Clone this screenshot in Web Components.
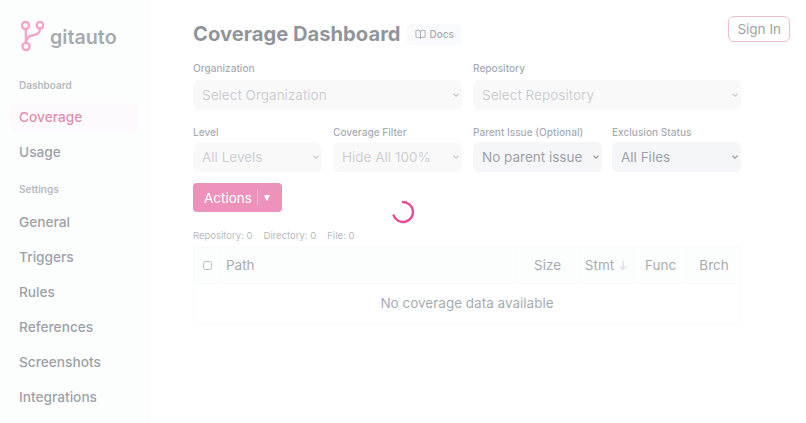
<!DOCTYPE html>
<html lang="en"><head><meta charset="utf-8"><title>Coverage Dashboard</title>
<style>
html,body{margin:0;height:100%;overflow:hidden;background:#fff;font-family:Inter,"Liberation Sans",sans-serif;color:#111827}
</style></head><body>
<app-shell>
  <side-bar slot="side"></side-bar>
  <coverage-page slot="main"></coverage-page>
</app-shell>
<loading-overlay></loading-overlay>
<script>
const def=(name,html)=>customElements.define(name,class extends HTMLElement{
  constructor(){super();this.attachShadow({mode:'open'}).innerHTML=typeof html==='function'?html(this):html}
});
def('app-shell',`<style>:host{display:flex;height:423px;overflow:hidden}
slot[name=main]{display:block;flex:1;min-width:0}</style><slot name="side"></slot><slot name="main"></slot>`);

def('nav-item',el=>`<style>:host{display:flex;align-items:center;height:30px;padding:0 9px;border-radius:8px;font-size:13.7px;font-weight:500;color:#374151}
:host([active]){background:#fdf2f8;color:#be185d}</style><slot></slot>`);
def('nav-label',`<style>:host{display:block;font-size:10px;font-weight:600;color:#6b7280;padding:0 9px;line-height:14px}</style><slot></slot>`);
def('side-bar',`<style>:host{display:block;width:150px;flex:none;height:423px;box-sizing:border-box;background:#f9fafb;border-right:1px solid #f3f4f6;padding:0 10px;overflow:hidden}
.logo{display:flex;align-items:center;gap:6px;height:36px;margin:19px 0 0 10px}
.word{font-size:19.7px;font-weight:600;color:#4b5563;font-family:Inter,sans-serif}
svg{display:block}
nav-label{margin-top:15px;margin-bottom:11px}
nav-item+nav-item{margin-top:5px}
.first{margin-top:23px;margin-bottom:10px}
</style>
<div class="logo"><svg width="24" height="36" viewBox="0 0 24 36" fill="none" stroke="#ec4899" stroke-width="2.4" stroke-linecap="round">
<circle cx="5.5" cy="6.5" r="3.6"/><circle cx="20" cy="6.2" r="3.3"/><circle cx="6" cy="27.5" r="3.6"/>
<path d="M5.8 10 L6 24"/><path d="M20 9.5 C20 15 16 15.5 12 16.5 C8.5 17.5 6.3 19 6 23"/></svg>
<span class="word">gitauto</span></div>
<nav-label class="first">Dashboard</nav-label>
<nav-item active>Coverage</nav-item>
<nav-item>Usage</nav-item>
<nav-label>Settings</nav-label>
<nav-item>General</nav-item>
<nav-item>Triggers</nav-item>
<nav-item>Rules</nav-item>
<nav-item>References</nav-item>
<nav-item>Screenshots</nav-item>
<nav-item>Integrations</nav-item>`);

customElements.define('filter-select',class extends HTMLElement{
  constructor(){super();const s=this.attachShadow({mode:'open'});
  const dis=this.hasAttribute('disabled')?'disabled':'';
  s.innerHTML=`<style>:host{display:block;min-width:0}
  label{display:block;font-size:10.1px;font-weight:500;color:#4b5563;line-height:14px;margin-bottom:var(--label-gap,5px)}
  .wrap{position:relative}
  select{display:block;appearance:none;width:100%;height:30px;box-sizing:border-box;border:0;border-radius:6px;background-color:#ebecee;color:#374151;font:400 13.5px Inter,sans-serif;padding:0 12px 0 9px;outline:0}
  select:disabled{color:rgba(55,65,81,.5);opacity:1;background-color:#f3f3f4}
  svg{position:absolute;right:3px;top:13px;display:block;pointer-events:none;color:#374151}
  select:disabled+svg{opacity:.5}
  </style><label>${this.getAttribute('label')}</label><div class="wrap"><select ${dis}><option>${this.getAttribute('value')}</option></select><svg width="6" height="4" viewBox="0 0 6 4" fill="none" stroke="currentColor" stroke-width="1.3"><path d="M.5 .7 3 3.2 5.5 .7"/></svg></div>`;}
});

def('doc-chip',`<style>:host{display:inline-flex;align-items:center;gap:4px;height:21px;padding:0 8px;background:#f3f4f6;border-radius:4px;font-size:9.9px;font-weight:500;color:#4b5563}
svg{display:block}</style><svg width="11" height="11" viewBox="0 0 24 24" fill="none" stroke="#4b5563" stroke-width="2" stroke-linecap="round" stroke-linejoin="round"><path d="M12 7v14"/><path d="M3 18a1 1 0 0 1-1-1V4a1 1 0 0 1 1-1h5a4 4 0 0 1 4 4 4 4 0 0 1 4-4h5a1 1 0 0 1 1 1v13a1 1 0 0 1-1 1h-6a3 3 0 0 0-3 3 3 3 0 0 0-3-3z"/></svg><slot></slot>`);
def('sign-in',`<style>:host{display:flex;align-items:center;height:26px;padding:0 9px;border-radius:6px;outline:1px solid #db7ba0;outline-offset:-1px;font-size:13.5px;color:#374151;background:#fff;box-shadow:0 1px 3px rgba(0,0,0,.08)}</style><slot></slot>`);
def('actions-button',`<style>:host{display:inline-flex;align-items:center;height:29px;width:89px;box-sizing:border-box;padding-left:11px;background:#db2777;border-radius:4px;color:#fff;font-size:13.5px;font-weight:400}
i{display:block;width:1px;height:15px;background:rgba(255,255,255,.35);margin:0 6px 0 5px}
b{font:400 7.5px "DejaVu Sans",sans-serif}</style><slot></slot><i></i><b>▼</b>`);

def('coverage-table',`<style>:host{display:block;margin-top:4px}
table{width:100%;border-collapse:collapse;table-layout:fixed;font-size:13.5px;color:#4b5563}
th,td{border:1px solid #f3f4f6;padding:0 0 2px;font-weight:400}
thead th{height:33px;background:#f9fafb;}
th{text-align:center}
th.p{text-align:left;padding-left:5px}
th.c{padding-bottom:0}
th.n{padding-left:1px}
td{height:38px;text-align:center;color:#4b5563}
input{display:block;margin:0 auto;width:9px;height:9px;accent-color:#ec4899}
.st{display:inline-flex;align-items:center;gap:3px}
svg{display:block}
</style><table><colgroup><col style="width:27px"><col><col style="width:64px"><col style="width:54px"><col style="width:53px"><col style="width:54px"></colgroup>
<thead><tr><th class="c"><input type="checkbox" aria-label="Select all"></th><th class="p">Path</th><th>Size</th><th class="n"><span class="st">Stmt<svg width="12" height="12" viewBox="0 0 12 12" fill="none" stroke="#9ca3af" stroke-width="1"><path d="M6 1.5v9M2.5 7L6 10.5 9.5 7"/></svg></span></th><th class="n">Func</th><th class="n">Brch</th></tr></thead>
<tbody><tr><td colspan="6">No coverage data available</td></tr></tbody></table>`);

def('coverage-page',`<style>:host{display:block;position:relative;height:423px;box-sizing:border-box;padding:17px 65px 0 43px;overflow:hidden}
header{display:flex;align-items:center;gap:6px;height:34px;justify-content:flex-start}
h1{margin:0;font-size:20.2px;font-weight:700;color:#1f2937;line-height:34px}
sign-in{position:absolute;top:16px;right:16px}
.r1,.r2{display:grid;column-gap:11px}
.r1{grid-template-columns:269px 268px;margin-top:10px;--label-gap:5px}
.r2{grid-template-columns:repeat(3,129px) 128px;margin-top:15px;--label-gap:3px}
.r2 filter-select:last-child{margin-left:-1px}
.act{height:29px;margin-top:11px}
.counts{display:flex;gap:11px;font-size:9.5px;color:#6b7280;line-height:14px;margin-top:17px}
</style>
<header><h1>Coverage Dashboard</h1><doc-chip>Docs</doc-chip></header>
<sign-in>Sign In</sign-in>
<div class="r1"><filter-select disabled label="Organization" value="Select Organization"></filter-select><filter-select disabled label="Repository" value="Select Repository"></filter-select></div>
<div class="r2"><filter-select disabled label="Level" value="All Levels"></filter-select><filter-select disabled label="Coverage Filter" value="Hide All 100%"></filter-select><filter-select label="Parent Issue (Optional)" value="No parent issue"></filter-select><filter-select label="Exclusion Status" value="All Files"></filter-select></div>
<div class="act"><actions-button>Actions</actions-button></div>
<div class="counts"><span>Repository: 0</span><span>Directory: 0</span><span>File: 0</span></div>
<coverage-table></coverage-table>`);

def('loading-overlay',`<style>:host{position:fixed;inset:0;display:flex;align-items:center;justify-content:center;background:rgba(255,255,255,.5)}
svg{display:block}</style><svg width="24" height="24" viewBox="0 0 24 24" fill="none" stroke="#ec4899" stroke-width="2.4" stroke-linecap="round" role="img" aria-label="Loading"><path d="M12 2 A10 10 0 1 1 2.6 15.4"/></svg>`);
</script>
</body></html>
